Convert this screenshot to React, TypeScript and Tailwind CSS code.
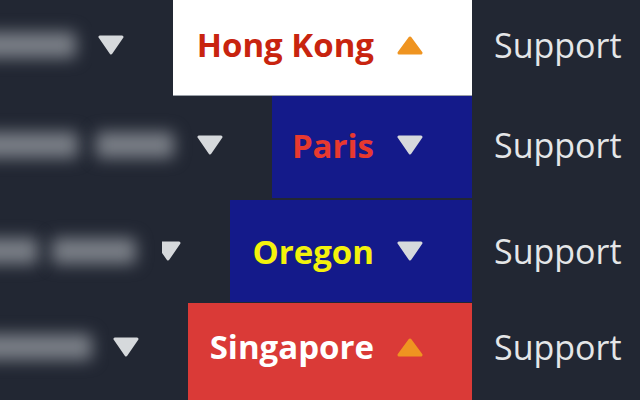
import React from "react";

type Row = {
  name: string;
  rowCls: string;
  boxCls: string;
  textCls: string;
  up: boolean;
  triCls: string;
  blobs: { cls: string }[];
  panelCls: string;
};

const rows: Row[] = [
  {
    name: "Hong Kong",
    rowCls: "h-[96px] pb-[6px]",
    boxCls: "w-[299px] bg-white border-b border-[#9aa0a8]",
    textCls: "text-[#c8240f]",
    up: true,
    triCls: "ml-[6px]",
    panelCls: "",
    blobs: [{ cls: "ml-[-20px] w-[96px]" }],
  },
  {
    name: "Paris",
    rowCls: "h-[102px] pb-[4px]",
    boxCls: "w-[200px] bg-[#141a8a]",
    textCls: "text-[#e8392f]",
    up: false,
    triCls: "ml-[0px]",
    panelCls: "",
    blobs: [
      { cls: "ml-[-20px] w-[98px]" },
      { cls: "ml-[18px] w-[78px]" },
    ],
  },
  {
    name: "Oregon",
    rowCls: "h-[102px] mt-[2px]",
    boxCls: "w-[242px] bg-[#141a8a]",
    textCls: "text-[#f4f20c]",
    up: false,
    triCls: "ml-[-7px]",
    panelCls: "z-10",
    blobs: [
      { cls: "ml-[-20px] w-[58px]" },
      { cls: "ml-[14px] w-[84px]" },
    ],
  },
  {
    name: "Singapore",
    rowCls: "h-[97px] mt-[1px] pb-[10px]",
    boxCls: "w-[284px] bg-[#da3a37]",
    textCls: "text-white",
    up: true,
    triCls: "ml-[4px]",
    panelCls: "",
    blobs: [{ cls: "ml-[-20px] w-[112px]" }],
  },
];

function Caret({ up, className }: { up: boolean; className?: string }) {
  return (
    <svg
      width="26"
      height="20"
      viewBox="0 0 26 20"
      className={"shrink-0 " + (className ?? "")}
    >
      {up ? (
        <polygon
          points="13,3 24,18 2,18"
          fill="#ef9421"
          stroke="#ef9421"
          strokeWidth="3"
          strokeLinejoin="round"
        />
      ) : (
        <polygon
          points="2,2 24,2 13,18"
          fill="#d6d9dc"
          stroke="#d6d9dc"
          strokeWidth="3"
          strokeLinejoin="round"
        />
      )}
    </svg>
  );
}

function NavRow({ r }: { r: Row }) {
  return (
    <div className="flex">
      {/* account menu, name hidden behind a blur */}
      <div className={"flex flex-1 items-center pr-[49px] " + r.rowCls}>
        <div
          className={
            "relative flex h-full flex-1 items-center overflow-hidden bg-[#222733] " +
            r.panelCls
          }
        >
          {r.blobs.map((b, i) => (
            <span
              key={i}
              className={
                "h-[26px] shrink-0 rounded-[4px] bg-[#7a7f87] blur-[8px] " + b.cls
              }
            />
          ))}
        </div>
        <Caret up={false} className={r.triCls} />
      </div>
      {/* region selector */}
      <div
        className={
          "flex items-center justify-end gap-[23px] pr-[49px] " + r.boxCls + " " + r.rowCls
        }
      >
        <span className={"text-[33px] font-bold leading-none " + r.textCls}>
          {r.name}
        </span>
        <Caret up={r.up} />
      </div>
      {/* support menu */}
      <div className={"flex w-[168px] items-center pl-[22px] " + r.rowCls}>
        <span className="text-[34px] leading-none text-[#e4e6e8]">Support</span>
      </div>
    </div>
  );
}

export default function App() {
  return (
    <div
      className="h-[400px] w-[640px] overflow-hidden bg-[#222733]"
      style={{ fontFamily: '"Open Sans", "Noto Sans", sans-serif' }}
    >
      {rows.map((r) => (
        <NavRow key={r.name} r={r} />
      ))}
    </div>
  );
}
